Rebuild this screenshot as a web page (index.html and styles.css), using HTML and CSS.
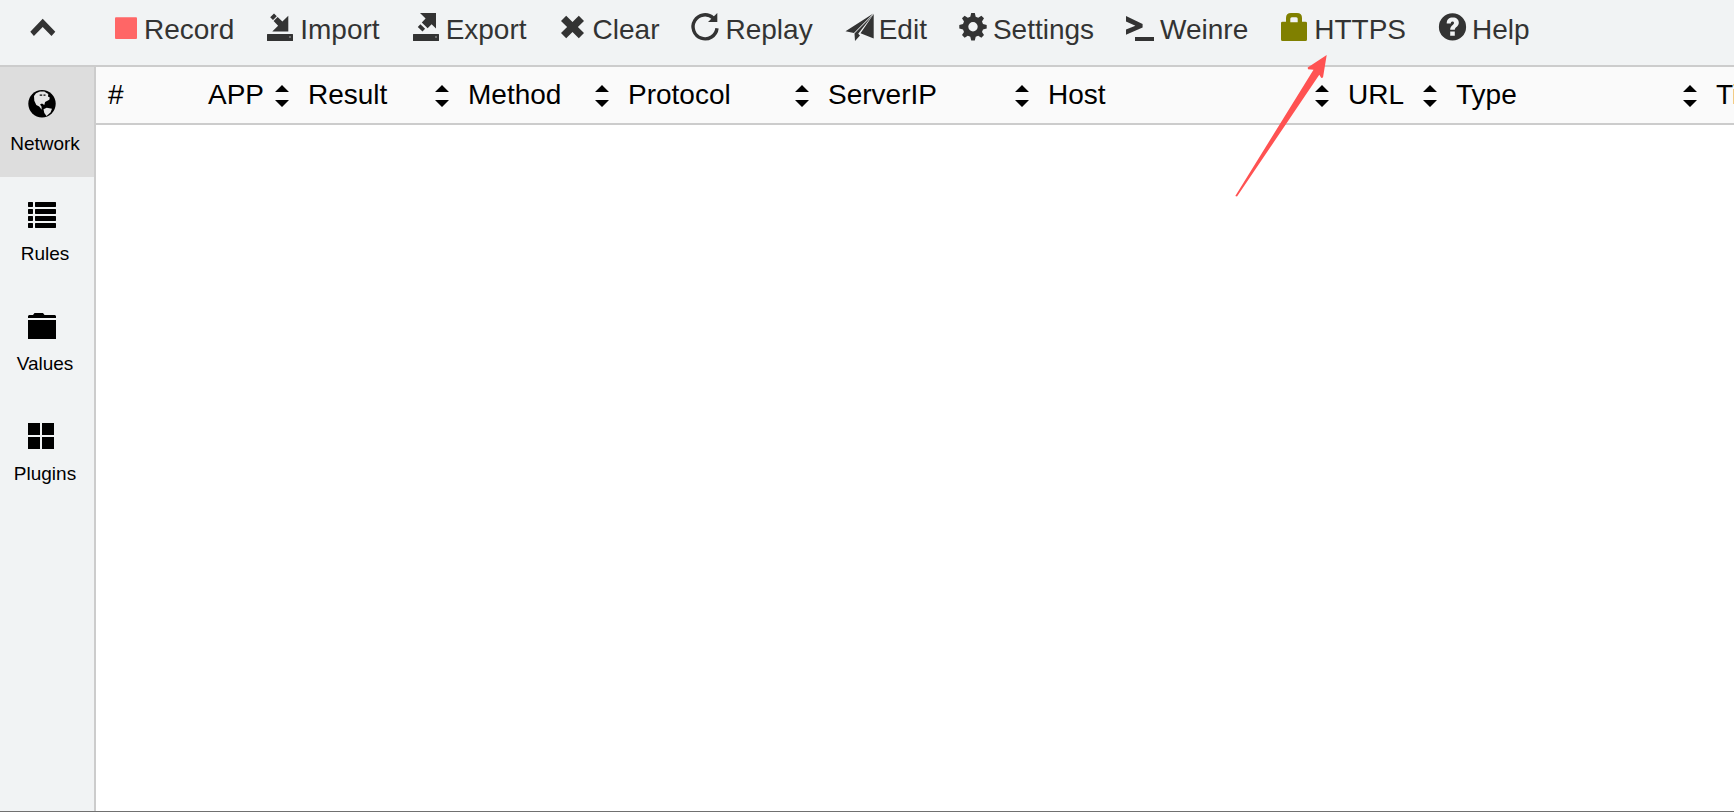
FILE: index.html
```html
<!DOCTYPE html>
<html lang="en">
<head>
<meta charset="utf-8">
<title>Network</title>
<link rel="stylesheet" href="styles.css">
</head>
<body>
<div class="app">
  <header class="toolbar">
    <button class="collapse" type="button" aria-label="Collapse sidebar">
      <svg class="icon" viewBox="0 0 28 28"><path d="M1.3 18.800 13.700 5.800l12.600 13-3.800 4.200-8.800-9.100L4.900 23z"/></svg>
    </button>
    <nav class="actions">
      <a class="action" href="#record"><svg class="icon record" viewBox="0 0 28 28"><rect x="5" y="4.3" width="22" height="21.7" rx="1"/></svg>Record</a>
      <a class="action" href="#import"><svg class="icon" viewBox="0 0 28 28"><path d="M4.200 4.200 8 .6l2.800 2.600L7 7zM7.600 8l4-4 4.800 4.500 5.900-5.800v15.800h-16l5.800-5.800zM1.500 21h25q.5 0 .5.5v6q0 .5-.5.5h-25q-.5 0-.5-.5v-6q0-.5.5-.5z"/><path class="led" d="M23 23.500h2v1h-2z"/></svg>Import</a>
      <a class="action" href="#export"><svg class="icon" viewBox="0 0 28 28"><path d="M8 0h16v15.500l-4.400-4.200-4 3.900L9.800 9.400l3.800-3.900zM5.800 14l2.600-2.700 4.700 4.500-2.600 2.600zM1.500 21h25q.5 0 .5.5v6q0 .5-.5.5h-25q-.5 0-.5-.5v-6q0-.5.5-.5z"/><path class="led" d="M23 23.500h2v1h-2z"/></svg>Export</a>
      <a class="action" href="#clear"><svg class="icon" viewBox="0 0 28 28"><path d="m7.200 2.700 6.300 6.200 6.300-6.200L25 8l-6.100 6 6.100 6-5.200 5.300-6.300-6.200-6.300 6.200L2 20l6.100-6L2 8z"/></svg>Clear</a>
      <a class="action" href="#replay"><svg class="icon" viewBox="0 0 28 28"><path class="line" d="M26 15.200A12 12 0 1 1 22.200 5"/><path d="M26.300 0v9H17z"/></svg>Replay</a>
      <a class="action" href="#edit"><svg class="icon" viewBox="0 0 28 28"><path d="M.5 18.200 28.300.4 8.900 19.900zM9.500 20.500 27.600 2.300 13.200 20.800l1.800 1.600L10 28zM28.700 1v24.600l-13.200-5.300z"/></svg>Edit</a>
      <a class="action" href="#settings"><svg class="icon" viewBox="0 0 28 28"><path fill-rule="evenodd" d="M12.200 0h3.600l.9 3.700 2.500 1 3.200-2 2.600 2.600-2 3.200 1 2.500 3.700.9v3.600l-3.700.9-1 2.500 2 3.200-2.600 2.600-3.200-2-2.500 1-.9 3.700h-3.600l-.9-3.700-2.500-1-3.200 2L3 22.100l2-3.200-1-2.500-3.700-.9v-3.600l3.700-.9 1-2.500-2-3.200 2.600-2.600 3.200 2 2.500-1zM14 9a4.700 4.700 0 1 0 0 9.400A4.700 4.700 0 1 0 14 9z"/></svg>Settings</a>
      <a class="action" href="#weinre"><svg class="icon" viewBox="0 0 28 28"><path d="m0 3 16.600 8v3.600L0 21.800v-5.200l9.400-3.900L0 8.400zM9 24h19v4H9z"/></svg>Weinre</a>
      <a class="action" href="#https"><svg class="icon secure" viewBox="0 0 28 28"><path fill-rule="evenodd" d="M6 8.700V5q0-5 5-5h6q5 0 5 5v3.700h3.500Q27 8.700 27 10v16.500q0 1.500-1.500 1.500h-23Q1 28 1 26.500V10q0-1.300 1.500-1.300zm4.300.6h7.400V5.800q0-1.500-1.500-1.500h-4.400q-1.500 0-1.500 1.500z"/></svg>HTTPS</a>
      <a class="action" href="#help"><svg class="icon" viewBox="0 0 28 28"><path fill-rule="evenodd" d="M14.500.3a13.600 13.600 0 1 0 0 27.200 13.600 13.600 0 1 0 0-27.200zM8.700 10.500C8.800 6.300 11 4.500 14.800 4.500c3.800 0 6 2 6 5.200 0 3.800-4 4.300-4 7h-4.600c0-4.500 3.800-4.700 3.800-6.800 0-1-.6-1.500-1.500-1.500-1.200 0-1.700.8-1.700 2.100zM12.200 18.500h4.600v4.200h-4.600z"/></svg>Help</a>
    </nav>
  </header>
  <div class="body">
    <nav class="sidebar">
      <a class="tab active" href="#network"><svg class="icon" viewBox="0 0 28 28"><circle cx="14" cy="13.700" r="13.700"/><path class="land" d="M12 1.500 8 3.300 6 6l.3 4.700 2 4.300 2.900 1.500 2.500 3.300-.2-3.300-1.500-2 2-1 2.300 1.500.8-3 4.200-2.300.5-2.200-1.800-1 .3-2.500-2.500-1.500-1.500-1zM15.500 19.300l3.200-1.500 5.300 1-1.500 3.700-4 3.500-2.200-3z"/><path d="M11.700 4.500h2.500v1.200h-2.500zM15.500 4.500h2v1.200h-2z"/></svg><span>Network</span></a>
      <a class="tab" href="#rules"><svg class="icon" viewBox="0 0 28 28"><path d="M.5 2h4l.5.5v4l-.5.500h-4L0 6.500v-4zM7.500 2h20l.5.5v4l-.5.500h-20L7 6.500v-4zM.5 9h4l.5.5v4l-.5.500h-4l-.5-.5v-4zM7.500 9h20l.5.5v4l-.5.500h-20l-.5-.5v-4zM.5 16h4l.5.5v4l-.5.500h-4l-.5-.5v-4zM7.500 16h20l.5.5v4l-.5.500h-20l-.5-.5v-4zM.5 23h4l.5.5v4l-.5.500h-4l-.5-.5v-4zM7.500 23h20l.5.5v4l-.5.500h-20l-.5-.5v-4z"/></svg><span>Rules</span></a>
      <a class="tab" href="#values"><svg class="icon" viewBox="0 0 28 28"><path d="M0 8V6l1-1h4l1.500-2h8.500l1.500 2H27l1 1v2zM0 10h28v19H0z"/></svg><span>Values</span></a>
      <a class="tab" href="#plugins"><svg class="icon" viewBox="0 0 28 28"><path d="M0 3h12v12H0zM14 3h12v12H14zM0 17h12v12H0zM14 17h12v12H14z"/></svg><span>Plugins</span></a>
    </nav>
    <main class="content">
      <table class="sessions">
        <colgroup>
          <col class="w-s"><col class="w-s"><col class="w-m"><col class="w-m"><col class="w-l"><col class="w-ip"><col class="w-host"><col><col class="w-type"><col class="w-l">
        </colgroup>
        <thead>
          <tr>
            <th scope="col"><div class="head">#</div></th>
            <th scope="col"><div class="head">APP<svg class="sort" viewBox="0 0 14 22"><path d="M0 7 7 0l7 7zM0 15h14l-7 7z"/></svg></div></th>
            <th scope="col"><div class="head">Result<svg class="sort" viewBox="0 0 14 22"><path d="M0 7 7 0l7 7zM0 15h14l-7 7z"/></svg></div></th>
            <th scope="col"><div class="head">Method<svg class="sort" viewBox="0 0 14 22"><path d="M0 7 7 0l7 7zM0 15h14l-7 7z"/></svg></div></th>
            <th scope="col"><div class="head">Protocol<svg class="sort" viewBox="0 0 14 22"><path d="M0 7 7 0l7 7zM0 15h14l-7 7z"/></svg></div></th>
            <th scope="col"><div class="head">ServerIP<svg class="sort" viewBox="0 0 14 22"><path d="M0 7 7 0l7 7zM0 15h14l-7 7z"/></svg></div></th>
            <th scope="col"><div class="head">Host<svg class="sort" viewBox="0 0 14 22"><path d="M0 7 7 0l7 7zM0 15h14l-7 7z"/></svg></div></th>
            <th scope="col"><div class="head">URL<svg class="sort" viewBox="0 0 14 22"><path d="M0 7 7 0l7 7zM0 15h14l-7 7z"/></svg></div></th>
            <th scope="col"><div class="head">Type<svg class="sort" viewBox="0 0 14 22"><path d="M0 7 7 0l7 7zM0 15h14l-7 7z"/></svg></div></th>
            <th scope="col"><div class="head">Time</div></th>
          </tr>
        </thead>
      </table>
    </main>
  </div>
  <svg class="pointer" viewBox="0 0 94 144" aria-hidden="true"><path d="M92.700 1 89 23.500l-1.700.5-2-3.300L3 142.500 1.300 142 79.500 15.700l-5.500-.4-.3-1.800z"/></svg>
</div>
</body>
</html>
```
FILE: styles.css
```css
* {
  box-sizing: border-box;
}

body {
  margin: 0;
  font-family: "Liberation Sans", Arial, sans-serif;
  font-size: 28px;
  line-height: 32px;
  color: #000;
  background: #fff;
}

a {
  color: inherit;
  text-decoration: none;
}

.app {
  position: relative;
  display: flex;
  flex-direction: column;
  height: 100vh;
  overflow: hidden;
  border-bottom: 1px solid #707070;
}

.icon {
  flex: none;
  width: 28px;
  height: 28px;
  overflow: visible;
  fill: currentColor;
}

.toolbar {
  display: flex;
  flex: none;
  padding: 13px 0 18px;
  color: #333;
  background: #f1f3f4;
  border-bottom: 2px solid #ccc;
}

.collapse {
  display: flex;
  justify-content: center;
  width: 94px;
  padding: 0 8px 0 0;
  color: inherit;
  background: none;
  border: 0;
}

.actions {
  display: flex;
}

.action {
  display: flex;
  gap: 6px;
  padding: 0 16px;
  line-height: 34px;
}

.record {
  color: #f66;
}

.secure {
  color: #808000;
}

.led {
  fill: #aaa;
}

.line {
  fill: none;
  stroke: currentColor;
  stroke-width: 3.4;
}

.body {
  display: flex;
  flex: 1;
  min-height: 0;
}

.sidebar {
  flex: none;
  width: 96px;
  background: #f1f3f4;
  border-right: 2px solid #ccc;
}

.tab {
  display: flex;
  flex-direction: column;
  align-items: center;
  gap: 12px;
  padding: 23px 4px 19px 0;
  font-size: 19px;
  line-height: 28px;
}

.tab .icon {
  margin-right: 6px;
}

.active {
  background: #ddd;
}

.land {
  fill: #e4e4e4;
}

.content {
  flex: 1;
  min-width: 0;
  overflow: hidden;
}

.sessions {
  width: 100%;
  min-width: 1808px;
  table-layout: fixed;
  border-collapse: collapse;
}

.sessions th {
  padding: 0;
  font-weight: normal;
  text-align: left;
  background: #fafafa;
}

.head {
  display: flex;
  align-items: center;
  justify-content: space-between;
  padding: 12px 7px 12px 12px;
  border-bottom: 2px solid #ccc;
}

.sort {
  flex: none;
  width: 14px;
  height: 22px;
  margin-top: 2px;
}

.w-s {
  width: 100px;
}

.w-m {
  width: 160px;
}

.w-l {
  width: 200px;
}

.w-ip {
  width: 220px;
}

.w-type {
  width: 260px;
}

.w-host {
  width: 300px;
}

.pointer {
  position: absolute;
  top: 54px;
  left: 1234px;
  width: 94px;
  height: 144px;
  fill: #ff5252;
  pointer-events: none;
}
```
